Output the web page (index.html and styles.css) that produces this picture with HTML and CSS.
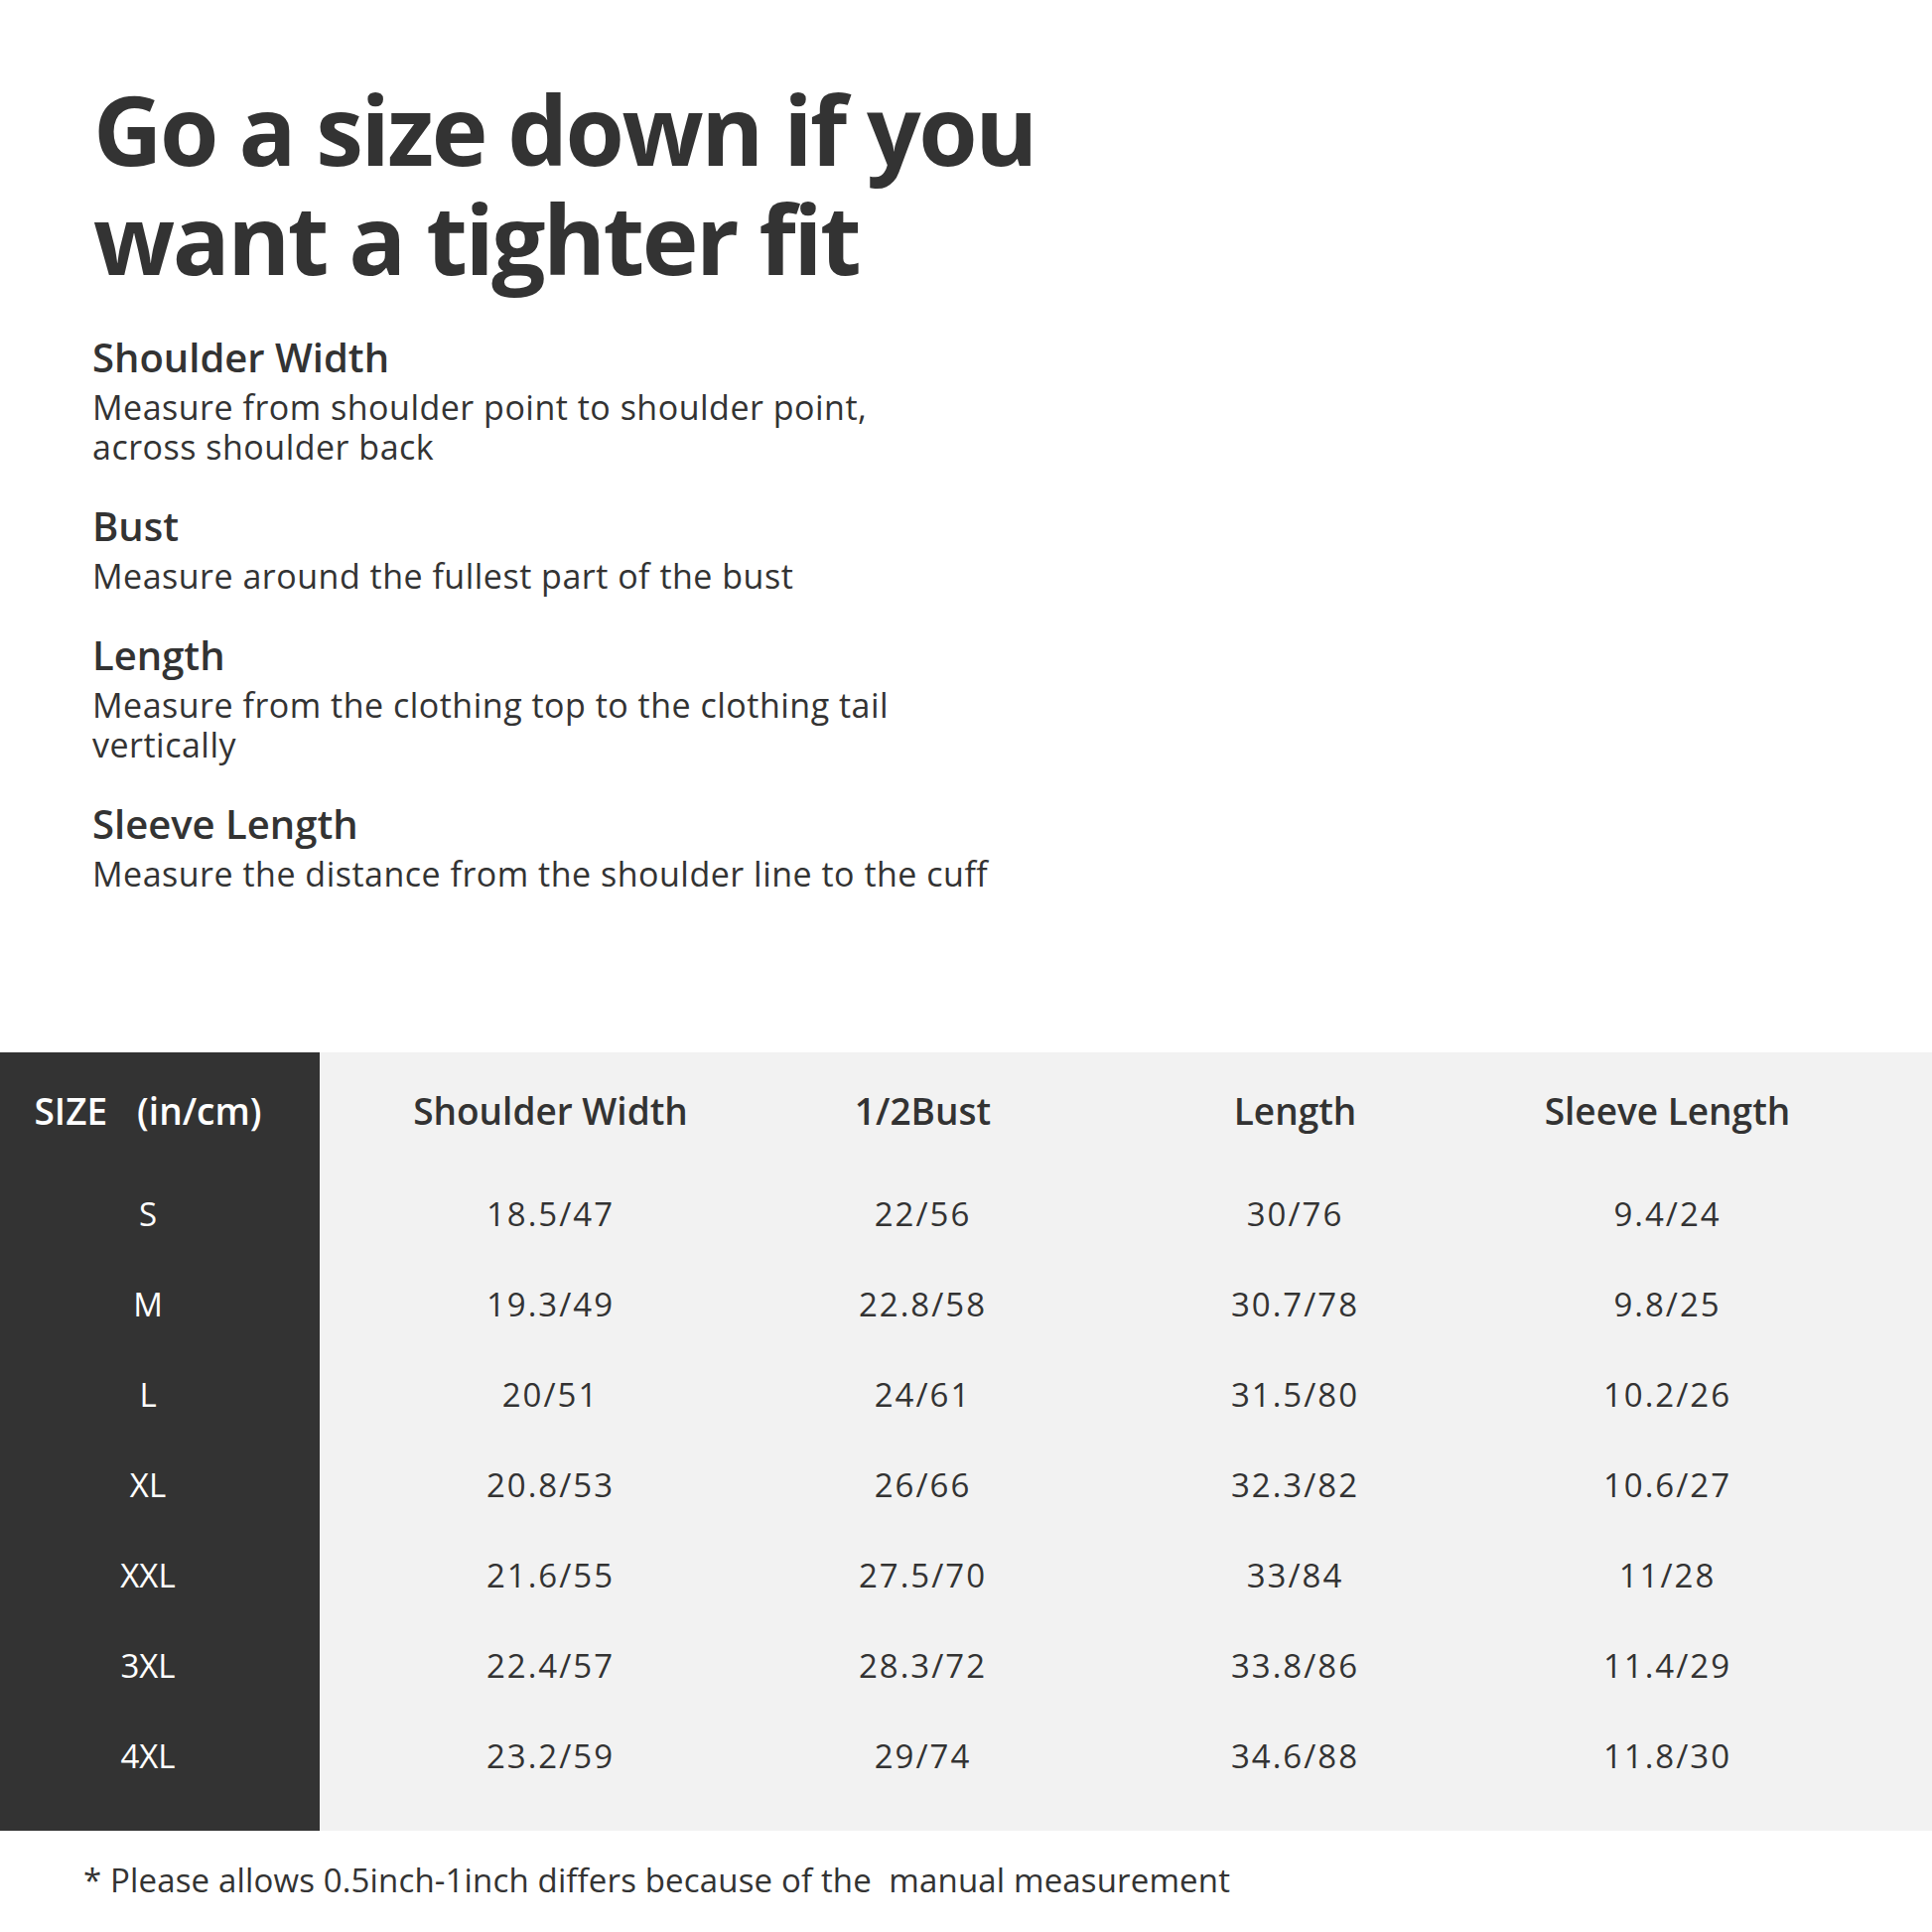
FILE: index.html
```html
<!DOCTYPE html>
<html lang="en">
<head>
<meta charset="utf-8">
<title>Size chart</title>
<link rel="stylesheet" href="styles.css">
</head>
<body>
<main class="page">
  <h1 class="title">Go a size down if you<br>want a tighter fit</h1>

  <section class="guide">
    <div class="item">
      <h2 class="item-title">Shoulder Width</h2>
      <p class="item-desc">Measure from shoulder point to shoulder point,<br>across shoulder back</p>
    </div>
    <div class="item">
      <h2 class="item-title">Bust</h2>
      <p class="item-desc">Measure around the fullest part of the bust</p>
    </div>
    <div class="item">
      <h2 class="item-title">Length</h2>
      <p class="item-desc">Measure from the clothing top to the clothing tail<br>vertically</p>
    </div>
    <div class="item">
      <h2 class="item-title">Sleeve Length</h2>
      <p class="item-desc">Measure the distance from the shoulder line to the cuff</p>
    </div>
  </section>

  <section class="chart">
    <div class="row head">
      <div class="size">SIZE<span class="gap"></span>(in/cm)</div>
      <div class="val">Shoulder Width</div>
      <div class="val">1/2Bust</div>
      <div class="val">Length</div>
      <div class="val">Sleeve Length</div>
    </div>
    <div class="row">
      <div class="size">S</div><div class="val">18.5/47</div><div class="val">22/56</div><div class="val">30/76</div><div class="val">9.4/24</div>
    </div>
    <div class="row">
      <div class="size">M</div><div class="val">19.3/49</div><div class="val">22.8/58</div><div class="val">30.7/78</div><div class="val">9.8/25</div>
    </div>
    <div class="row">
      <div class="size">L</div><div class="val">20/51</div><div class="val">24/61</div><div class="val">31.5/80</div><div class="val">10.2/26</div>
    </div>
    <div class="row">
      <div class="size">XL</div><div class="val">20.8/53</div><div class="val">26/66</div><div class="val">32.3/82</div><div class="val">10.6/27</div>
    </div>
    <div class="row">
      <div class="size">XXL</div><div class="val">21.6/55</div><div class="val">27.5/70</div><div class="val">33/84</div><div class="val">11/28</div>
    </div>
    <div class="row">
      <div class="size">3XL</div><div class="val">22.4/57</div><div class="val">28.3/72</div><div class="val">33.8/86</div><div class="val">11.4/29</div>
    </div>
    <div class="row last">
      <div class="size">4XL</div><div class="val">23.2/59</div><div class="val">29/74</div><div class="val">34.6/88</div><div class="val">11.8/30</div>
    </div>
  </section>

  <p class="note">* Please allows 0.5inch-1inch differs because of the&nbsp; manual measurement</p>
</main>
</body>
</html>
```

FILE: styles.css
```css
* { box-sizing: border-box; }

html, body {
  margin: 0;
  padding: 0;
  background: #ffffff;
}

body {
  font-family: "Open Sans", "Noto Sans", "Liberation Sans", sans-serif;
  color: #333333;
  width: 1946px;
}

.page {
  display: flex;
  flex-direction: column;
}

.title {
  margin: 75px 0 0 94px;
  font-size: 96px;
  line-height: 110px;
  font-weight: 700;
  letter-spacing: -2.5px;
  color: #333333;
}

.guide {
  margin: 41px 0 0 93px;
  display: flex;
  flex-direction: column;
  gap: 36px;
}

.item-title {
  margin: 0;
  font-size: 40px;
  line-height: 48px;
  font-weight: 600;
  color: #333333;
}

.item-desc {
  margin: 6px 0 0;
  font-size: 34px;
  line-height: 40px;
  font-weight: 400;
  letter-spacing: 0.5px;
  color: #333333;
}

.chart {
  margin-top: 160px;
  background: #f2f2f2;
}

.row {
  display: grid;
  grid-template-columns: 322px 420px 375px 375px 454px;
  height: 91px;
}

.row.head { height: 117px; }
.row.last { height: 121px; }
.row.last > div { padding-bottom: 30px; }

.size {
  background: #333333;
  color: #ffffff;
  display: flex;
  align-items: center;
  justify-content: center;
  padding-right: 24px;
  font-size: 33px;
  font-weight: 500;
}

.head .size {
  font-size: 37px;
  font-weight: 600;
}

.gap { display: inline-block; width: 30px; }

.val {
  display: flex;
  align-items: center;
  justify-content: center;
  font-size: 33px;
  font-weight: 500;
  letter-spacing: 2px;
  color: #333333;
}

.val:nth-child(2) { padding-left: 45px; }
.val:nth-child(5) { padding-right: 79px; }

.head .val {
  font-size: 37px;
  font-weight: 600;
  letter-spacing: 0;
}

.note {
  margin: 30px 0 0 84px;
  font-size: 33px;
  line-height: 40px;
  letter-spacing: 0.15px;
  color: #333333;
}
```
